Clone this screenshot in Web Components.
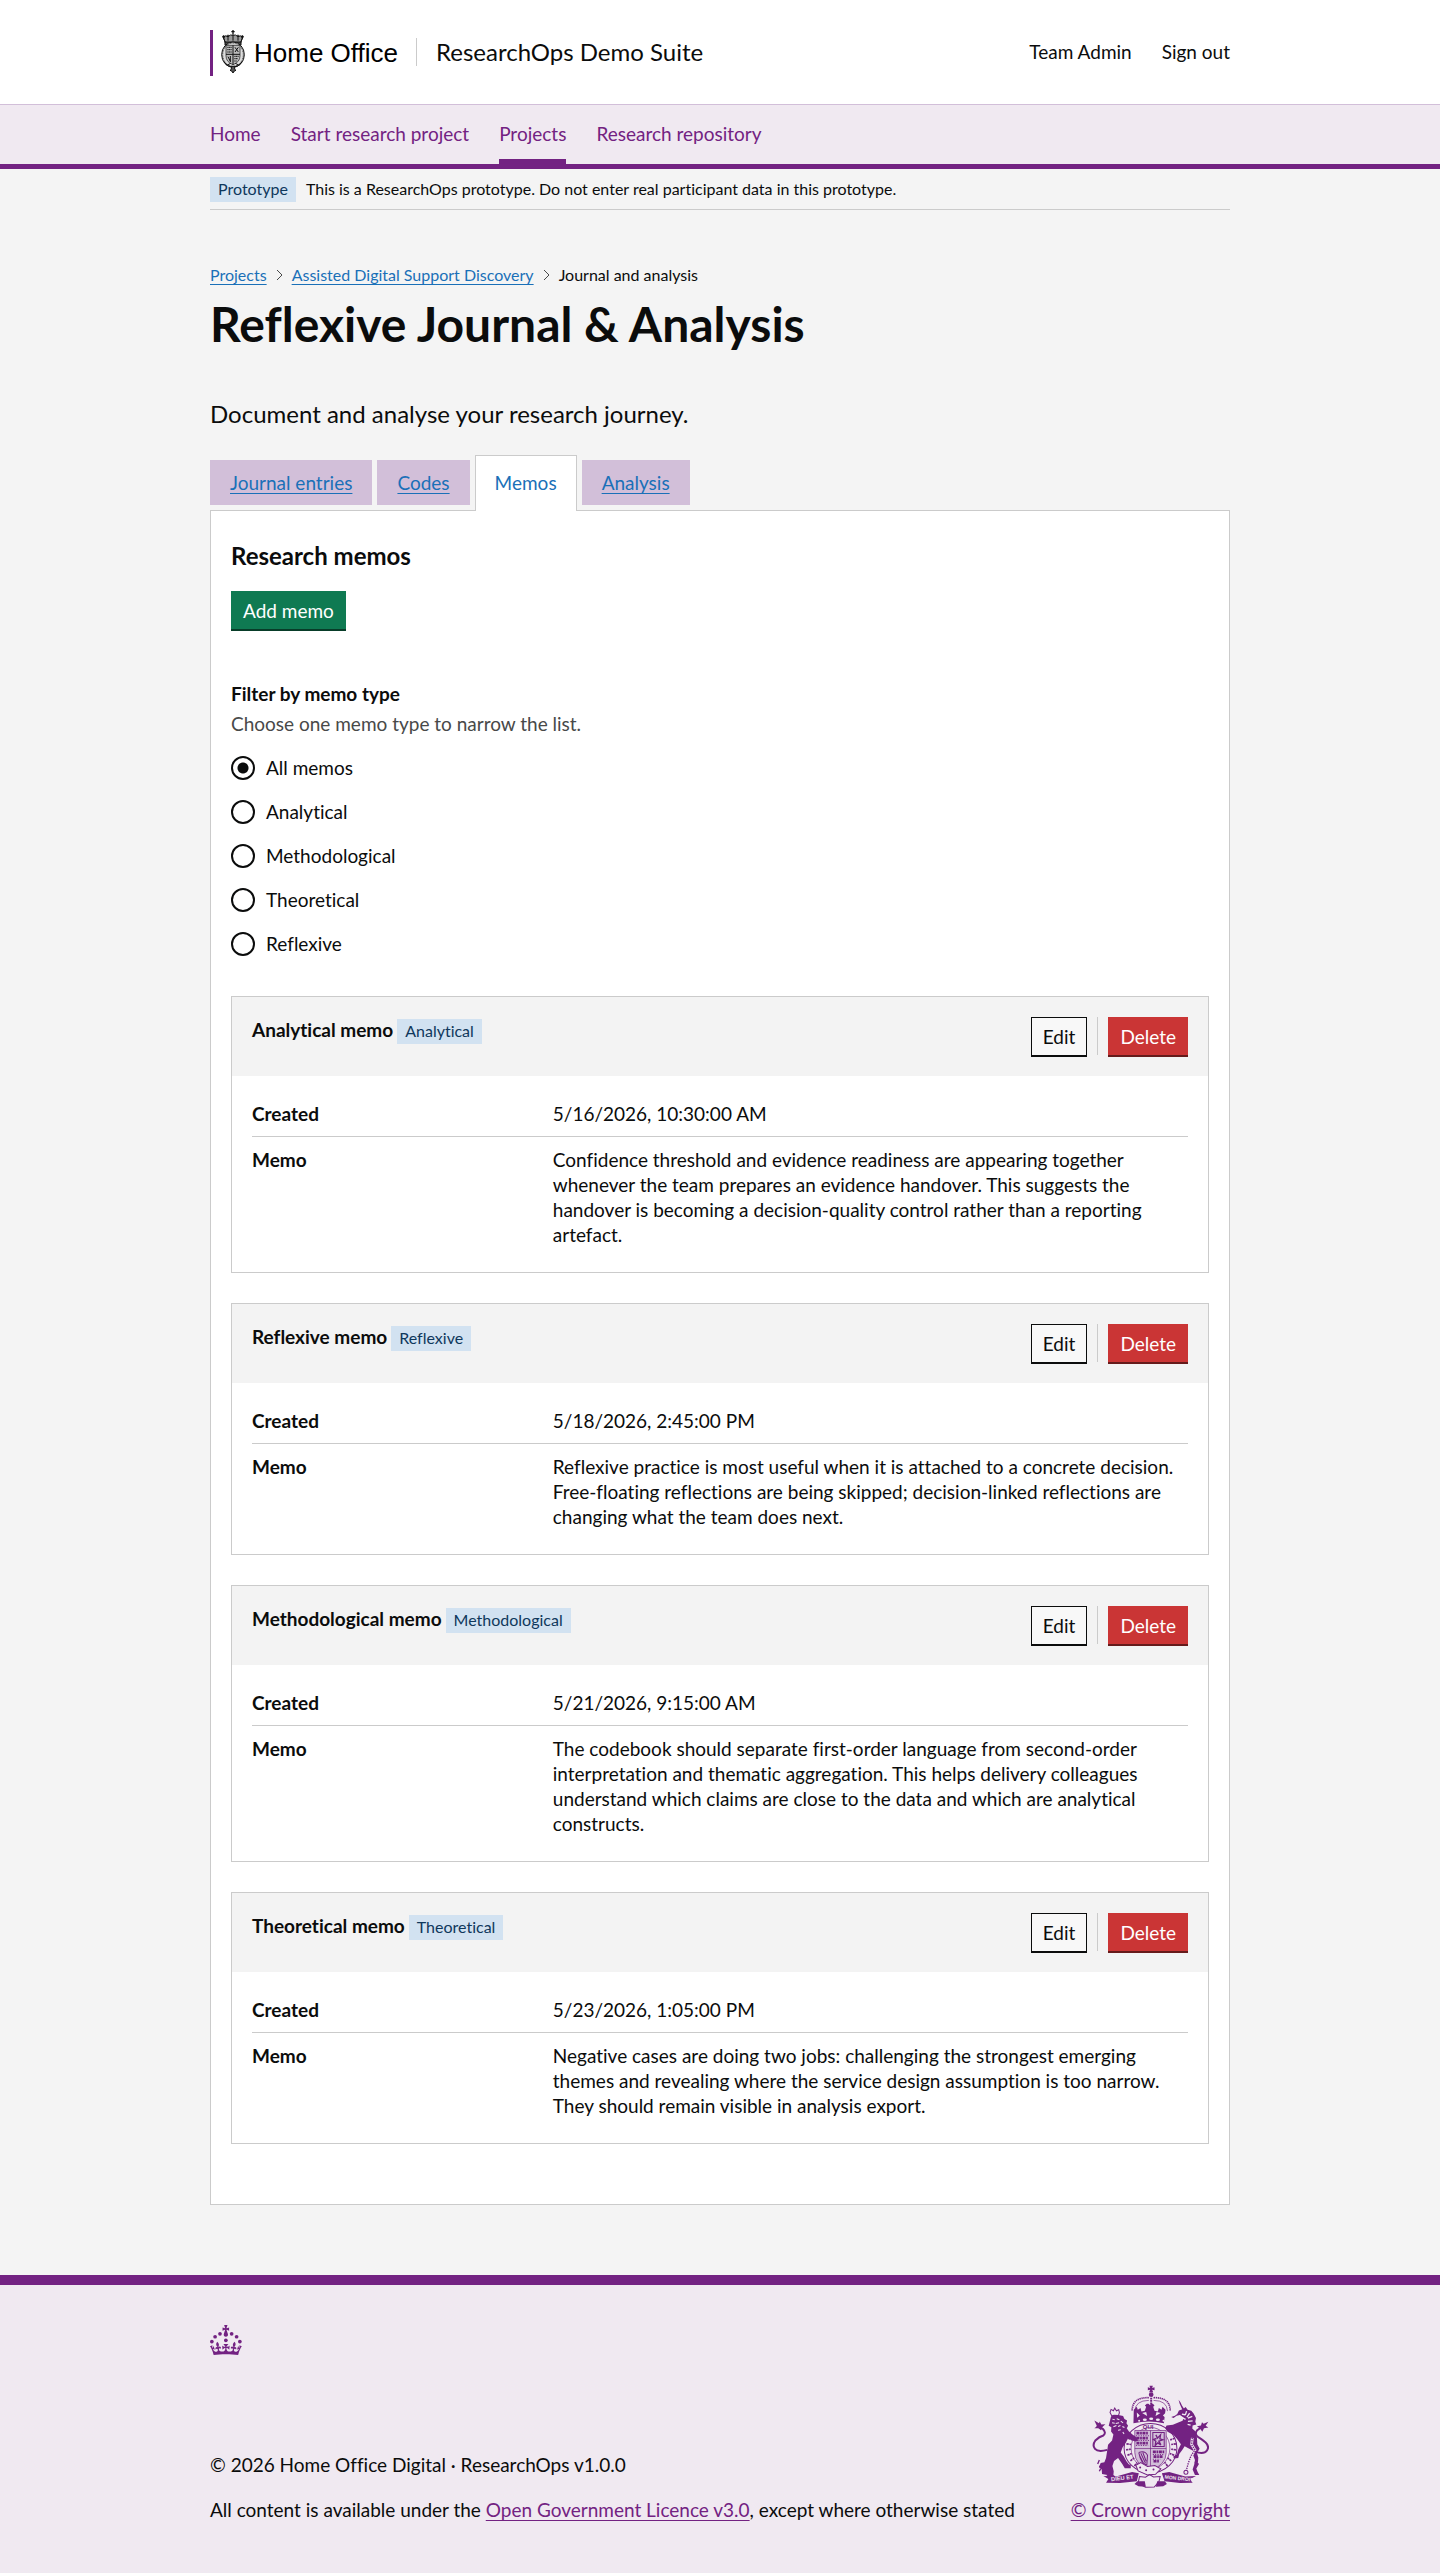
<!DOCTYPE html>
<html lang="en">
<head>
<meta charset="utf-8">
<meta name="viewport" content="width=device-width, initial-scale=1">
<title>Reflexive Journal &amp; Analysis</title>
<style>
    :root {
        --purple: #732282;
        --pale: #f0e9f1;
        --mid: #d2bfd9;
        --ink: #0b0c0c;
        --line: #cbcbcb;
        --link: #1a70b8;
    }

    body {
        margin: 0;
        background: #f4f4f4;
        color: var(--ink);
        font-family: Lato, "Liberation Sans", sans-serif;
        font-size: 19px;
        font-variant-ligatures: none;
        line-height: 25px;
    }

    .container {
        max-width: 1020px;
        margin: 0 auto;
        padding: 0 30px;
    }

    main {
        padding: 55px 0 70px;
    }

    h1 {
        margin: 14px 0 50px;
        font-size: 48px;
        line-height: 50px;
    }

    .lead {
        margin: 0 0 26px;
        font-size: 24px;
        line-height: 30px;
    }
</style>
</head>
<body>
<app-header service="ResearchOps Demo Suite">
    <a href="#">Team Admin</a>
    <a href="#">Sign out</a>
</app-header>
<service-nav items="Home,Start research project,Projects,Research repository" active="Projects"></service-nav>
<div class="container">
    <phase-banner phase="Prototype">This is a ResearchOps prototype. Do not enter real participant data in this prototype.</phase-banner>
    <main>
        <bread-crumbs items="Projects,Assisted Digital Support Discovery,Journal and analysis"></bread-crumbs>
        <h1>Reflexive Journal &amp; Analysis</h1>
        <p class="lead">Document and analyse your research journey.</p>
        <tab-list items="Journal entries,Codes,Memos,Analysis" active="Memos"></tab-list>
        <memo-panel heading="Research memos">
            <memo-filter options="All memos,Analytical,Methodological,Theoretical,Reflexive"></memo-filter>
            <memo-card type="Analytical" created="5/16/2026, 10:30:00 AM">Confidence threshold and evidence readiness are appearing together whenever the team prepares an evidence handover. This suggests the handover is becoming a decision-quality control rather than a reporting artefact.</memo-card>
            <memo-card type="Reflexive" created="5/18/2026, 2:45:00 PM">Reflexive practice is most useful when it is attached to a concrete decision. Free-floating reflections are being skipped; decision-linked reflections are changing what the team does next.</memo-card>
            <memo-card type="Methodological" created="5/21/2026, 9:15:00 AM">The codebook should separate first-order language from second-order interpretation and thematic aggregation. This helps delivery colleagues understand which claims are close to the data and which are analytical constructs.</memo-card>
            <memo-card type="Theoretical" created="5/23/2026, 1:05:00 PM">Negative cases are doing two jobs: challenging the strongest emerging themes and revealing where the service design assumption is too narrow. They should remain visible in analysis export.</memo-card>
        </memo-panel>
    </main>
</div>
<app-footer></app-footer>

<script>
// Small base: each element gives its markup from render()
class BaseElement extends HTMLElement {
    constructor() {
        super();
        this.attachShadow({ mode: "open" });
    }

    connectedCallback() {
        const template = document.createElement("template");
        template.innerHTML = this.render();
        this.shadowRoot.replaceChildren(template.content.cloneNode(true));
    }

    list(name) {
        return (this.getAttribute(name) || "").split(",");
    }
}

const CREST = `
    <svg width="24" height="43" viewBox="63 90 72 129" fill="none" stroke="#111" stroke-width="3" aria-hidden="true">
        <path d="M99 90v14M94 95h10" stroke-width="4"/>
        <path d="M70 112q6-8 14-2q8-8 15-4q7-4 15 4q8-6 14 2l-6 16H76z" fill="#999"/>
        <path d="M70 112l6 16h46l6-16M84 110v12M99 106v16M114 110v12" />
        <circle cx="71" cy="110" r="3" fill="#111"/><circle cx="84" cy="107" r="2"/><circle cx="114" cy="107" r="2"/><circle cx="127" cy="110" r="3" fill="#111"/>
        <path d="M75 126h48v9H75z" fill="#444"/>
        <ellipse cx="99" cy="164" rx="34" ry="38" fill="#ddd"/>
        <ellipse cx="99" cy="164" rx="31" ry="35" stroke-dasharray="3 2" stroke="#333"/>
        <path d="M78 136h42v32q0 18-21 26q-21-8-21-26z" fill="#bbb" stroke-width="2"/>
        <path d="M99 136v58M78 163h42" stroke-width="3"/>
        <path d="M82 142h13M82 149h13M82 156h13M103 169h13M103 176h11M103 183h7" stroke-dasharray="4 1"/>
        <path d="M105 142l10 14M115 142l-10 14M84 170l7 14M91 168v18" />
        <path d="M72 186q10 14 22 14M126 186q-10 14-22 14M80 196l12-6M118 196l-12-6" stroke-width="3"/>
        <path d="M94 199h10v9l4 3-5 2-4 6-4-6-5-2 4-3z" fill="#555"/>
    </svg>`;

const CROWN = `
    <svg width="32" height="30" viewBox="0 0 64 60" fill="currentColor" aria-hidden="true">
        <circle cx="20" cy="17.6" r="3.7"/><circle cx="10.2" cy="23.5" r="3.7"/><circle cx="3.7" cy="33.2" r="3.7"/>
        <circle cx="31.7" cy="30.6" r="3.7"/><circle cx="43.3" cy="17.6" r="3.7"/><circle cx="53.2" cy="23.5" r="3.7"/><circle cx="59.7" cy="33.2" r="3.7"/>
        <path d="M33.1 9.8c.2-.1.3-.3.5-.5l4.6 2.4V4.9l-4.6 1.5c-.1-.2-.3-.3-.5-.5L35 0h-6.7l1.9 5.9c-.2.1-.3.3-.5.5l-4.6-1.5v6.8l4.6-2.4c.1.2.3.3.5.5l-2.6 8c-.9 2.8 1.2 5.7 4.1 5.7c3 0 5.1-2.9 4.1-5.7zM37 37.9s-3.4 3.8-4.1 6.1c2.2 0 4.2-.5 6.4-2.8l-.7 8.5c-2-2.8-4.4-4.1-5.7-3.8.1 3.1.5 6.7 5.8 7.2 3.7.3 6.7-1.5 7-3.8.4-2.6-2-4.3-3.7-1.6-1.4-4.5 2.4-6.1 4.9-3.2-1.9-4.5-1.8-7.7 2.4-10.9 3 4 2.6 7.3-1.2 11.1 2.4-1.3 6.2 0 4 4.6-1.2-2.8-3.7-2.2-4.2.2-.3 1.7.7 3.7 3 4.2 1.9.3 4.7-.9 7-5.9-1.3 0-2.4.7-3.9 1.7l2.4-8c.6 2.3 1.4 3.7 2.2 4.5.6-1.6.5-2.8 0-5.3l5 1.8c-2.6 3.6-5.2 8.7-7.3 17.5-7.4-1.1-15.7-1.7-24.5-1.7-8.8 0-17.1.6-24.5 1.7-2.1-8.9-4.7-13.9-7.3-17.5l5-1.8c-.5 2.5-.6 3.7 0 5.3.8-.8 1.6-2.3 2.2-4.5l2.4 8c-1.5-1-2.6-1.7-3.9-1.7 2.3 5 5.2 6.2 7 5.9 2.3-.4 3.3-2.4 3-4.2-.5-2.4-3-3.1-4.2-.2-2.2-4.6 1.6-6 4-4.6-3.7-3.7-4.2-7.1-1.2-11.1 4.2 3.2 4.3 6.4 2.4 10.9 2.5-2.8 6.3-1.3 4.9 3.2-1.8-2.7-4.1-1-3.7 1.6.3 2.3 3.3 4.1 7 3.8 5.4-.5 5.7-4.2 5.8-7.2-1.3-.2-3.7 1-5.7 3.8l-.7-8.5c2.2 2.3 4.2 2.7 6.4 2.8-.7-2.3-4.1-6.1-4.1-6.1z"/>
    </svg>`;

const ARMS = `
    <svg width="117" height="103" viewBox="104 46 350 308" fill="currentColor" stroke="currentColor" stroke-width="0" aria-hidden="true">
        <!-- crown -->
        <path d="M276 48h10l-2 7 7-2v9l-7-2 3 8h-12l3-8-7 2v-9l7 2z"/>
        <circle cx="281" cy="75" r="7"/>
        <g fill="none" stroke-width="4">
            <path d="M281 84v32" stroke-width="6" stroke-dasharray="5 2"/>
            <path d="M274 84q-50-2-50 40M288 84q50-2 50 40" stroke-width="5" stroke-dasharray="4 2"/>
            <path d="M274 92q-40 0-42 32M288 92q40 0 42 32" stroke-width="2"/>
        </g>
        <path d="M229 120l9-9 3 9 8-5 3 10 10-2 4-12-4-4 6-5h5l4 4 4-4h5l5 5-4 4 4 12 10 2 3-10 8 5 3-9 9 9-5 40q-45-10-91 0z"/>
        <g fill="#f0e9f1">
            <path d="M238 128l9 9-8 7zM325 128l-9 9 8 7zM254 130l12-3 3 12zM309 130l-12-3-3 12z"/>
            <ellipse cx="281" cy="147" rx="6" ry="4"/><ellipse cx="262" cy="150" rx="6" ry="4"/><ellipse cx="301" cy="150" rx="6" ry="4"/><circle cx="245" cy="153" r="3"/><circle cx="318" cy="153" r="3"/>
        </g>
        <!-- garter and shield -->
        <g fill="none">
            <ellipse cx="279" cy="235" rx="79" ry="74" stroke-width="3"/>
            <ellipse cx="279" cy="235" rx="58" ry="62" stroke-width="2"/>
            <path d="M212 205l12 5M207 222l14 2M206 240l14-2M210 256l13-5M219 273l11-9M231 288l8-10M352 205l-14 5M355 222l-14 2M355 240l-14-2M350 256l-13-5M341 273l-11-9M330 288l-9-11" stroke-width="5" stroke-dasharray="7 2"/>
        </g>
        <text x="256" y="179" font-family="Liberation Sans" font-size="18" font-weight="bold">QUI</text>
        <path d="M232 182h94v66q0 36-47 54q-47-18-47-54z" fill="#d2bfd9" stroke-width="2"/>
        <g fill="none">
            <path d="M279 182v120M232 236h94" stroke-width="2"/>
            <path d="M237 190h36M237 205h36M237 220h36M286 246h34M288 260h28M288 274h18" stroke-width="8" stroke-dasharray="9 2 5 2"/>
            <path d="M236 198h38M236 212h38M236 227h36M286 254h32M286 268h22" stroke-width="3" stroke-dasharray="3 4"/>
            <path d="M286 188h34v42h-34z" stroke-width="3"/>
            <path d="M295 195l5 10 9-10-2 12 9 3-12 4 6 11-9-6-8 8 2-13-7-5 9-3" stroke-width="4"/>
            <path d="M244 248q18-8 26 8l-2 30q-18-6-24-38M250 250l14 30M256 248l10 26M246 256l12 24" stroke-width="3"/>
        </g>
        <!-- lion -->
        <path d="M158 128l3-9 7 4 4-8 5 8 7-3 2 9-3 9h-20z" fill="none" stroke-width="3"/>
        <path d="M161 140l8-5 14 1 14 3 4 9 8 4-2 8 5 8-4 7 6 9 12 11 12 8 4 10-8 2-10-3-12-7-6 12-11 17-5 14 9 12 8 14 7 9 6 2v10h-18l-7-12-13-19-12 9-5 15 4 16-1 11 6 5-2 7h-17l-9-8 4-4-16-3-1-13-8-7 5-13 11-2 5-13 4-25 2-14 12-13 4-18-7-9 1-13-8-4z"/>
        <path d="M165 148l7 2M178 147l8 3M164 159l8 1M175 161l10-2M190 154l7 5M168 171l9-4M182 170l7-3M195 170l6 3M182 181l8-1M196 187l4 5" stroke="#f0e9f1" stroke-width="3"/>
        <path d="M150 240q-28 8-37-3t1-25q12-12 24-15q10-8-2-20l-18-8" fill="none" stroke-width="6"/>
        <path d="M111 152l14 8 2-5 5 9 12-1-8 8-5 10-8-6-12 0 8-6z"/>
        <path d="M126 270l-5 12M133 284l-7 7M130 296l-4 8" stroke-width="4"/>
        <!-- unicorn -->
        <path d="M363 90l6 8 4 9 10 15-7 2-6-14-4-9z"/>
        <path d="M352 138l7-5 5-11 13-4 7-6 6 8 11 3 7 8 7 14-2 11 3 8-11 3-1 9 9 8 5 20 1 19 7 14-8 12 4 14-1 15-11 3 2-11-5-13 3-12-12-7-17-9-6 10-10 13-3 12-13 2-2-6 11-6 4-15 8-16-12-16-11-12-17-9-7-11 4-8 19-2 16-7 13-5 3-10-11-7-10 2-9 7-7-3z"/>
        <path d="M373 133l9 2M387 124l-4 12M396 130l-8 12M404 140l-13 5M405 153l-14 2M376 145l8 4M390 164l9 2" stroke="#f0e9f1" stroke-width="4"/>
        <path d="M404 204l-2 20 10 16-12 18-8 22-6 22" fill="none" stroke="#f0e9f1" stroke-width="8"/>
        <path d="M404 204l-2 20 10 16-12 18-8 22-6 22" fill="none" stroke-width="4" stroke-dasharray="4 3"/>
        <circle cx="385" cy="307" r="6" fill="none" stroke-width="3"/>
        <path d="M412 246q28 8 36-4t-4-24q-12-10-22-16q-12-8-4-20l22-16" fill="none" stroke-width="6"/>
        <path d="M452 156l-14 6-5-5-3 10-12 2 9 7 7 10 5-11 13-2-8-5z"/>
        <path d="M414 270l10 12-8 14 4 10 5 9h-13l-7-16z"/>
        <!-- scrolls -->
        <path d="M138 318l38 2 48-14 20 4-6 24-50 5-42-1 7-11z"/>
        <path d="M415 318l-32 2-48-14-22 4 8 24 46 5 38-1-7-11z"/>
        <path d="M235 286l15-8 20 12 22-3 18 10-16 16-24 2-28-12z" fill="#f0e9f1" stroke-width="3"/>
        <circle cx="248" cy="293" r="3"/><circle cx="266" cy="301" r="3"/><circle cx="288" cy="299" r="3"/>
        <path d="M246 320l18 2 12-8 12 7 20-1-4 16-14 15-26 1-22-12z" fill="none" stroke-width="3"/>
        <path d="M240 334h22l3 16-22-1-12-7zM322 334h-23l-4 16 22-1 11-7z"/>
        <g fill="#f0e9f1" font-family="Liberation Sans" font-size="17" font-weight="bold">
            <text x="162" y="334" transform="rotate(-7 162 334)">DIEU ET</text>
            <text x="321" y="326" font-size="15" transform="rotate(6 321 326)">MON DROIT</text>
        </g>
    </svg>`;

class AppHeader extends BaseElement {
    render() {
        return `
            <style>
                :host { display: block; background: #fff; border-bottom: 1px solid var(--mid); }
                .inner {
                    display: flex;
                    align-items: center;
                    max-width: 1020px;
                    margin: 0 auto;
                    padding: 30px 30px 28px;
                }
                .logo {
                    display: flex;
                    align-items: center;
                    box-sizing: border-box;
                    height: 46px;
                    padding-left: 8px;
                    gap: 9px;
                    border-left: 3px solid var(--purple);
                    color: #000;
                    font: 26px/30px "Liberation Sans", Arial, sans-serif;
                    text-decoration: none;
                }
                .logo svg { margin-bottom: 3px; }
                .service {
                    display: flex;
                    align-items: center;
                    height: 28px;
                    margin-left: 18px;
                    padding-left: 19px;
                    border-left: 1px solid var(--line);
                    font-size: 24px;
                }
                .service, .account { margin-bottom: 3px; }
                .account { display: flex; gap: 30px; margin-left: auto; }
                ::slotted(a) { color: var(--ink); text-decoration: none; }
            </style>
            <header class="inner">
                <a class="logo" href="#">${CREST}<span>Home Office</span></a>
                <span class="service">${this.getAttribute("service")}</span>
                <div class="account"><slot></slot></div>
            </header>
        `;
    }
}

class ServiceNav extends BaseElement {
    render() {
        const active = this.getAttribute("active");
        const links = this.list("items").map((item) =>
            `<a href="#" ${item === active ? 'aria-current="page"' : ""}>${item}</a>`).join("");
        return `
            <style>
                :host { display: block; background: var(--pale); border-bottom: 5px solid var(--purple); }
                nav {
                    display: flex;
                    gap: 30px;
                    max-width: 1020px;
                    margin: 0 auto;
                    padding: 0 30px;
                }
                a {
                    padding: 16px 0 13px;
                    border-bottom: 5px solid transparent;
                    color: var(--purple);
                    text-decoration: none;
                }
                a[aria-current] { border-color: var(--purple); }
            </style>
            <nav>${links}</nav>
        `;
    }
}

class AppTag extends BaseElement {
    render() {
        return `
            <style>
                :host {
                    display: inline-block;
                    padding: 2px 8px 3px;
                    background: #d2e2f1;
                    color: #0f385c;
                    font-size: 16px;
                    font-weight: normal;
                    line-height: 20px;
                }
            </style>
            <slot></slot>
        `;
    }
}

class PhaseBanner extends BaseElement {
    render() {
        return `
            <style>
                :host {
                    display: flex;
                    align-items: flex-start;
                    gap: 10px;
                    padding: 8px 0 7px;
                    border-bottom: 1px solid var(--line);
                    font-size: 16px;
                    line-height: 20px;
                }
                span { padding-top: 2px; }
            </style>
            <app-tag>${this.getAttribute("phase")}</app-tag>
            <span><slot></slot></span>
        `;
    }
}

class BreadCrumbs extends BaseElement {
    render() {
        const items = this.list("items");
        const last = items.pop();
        return `
            <style>
                :host { display: block; font-size: 16px; line-height: 20px; }
                ol { display: flex; margin: 0; padding: 0; list-style: none; }
                li { display: flex; align-items: center; }
                a { color: var(--link); text-decoration-thickness: 1px; text-underline-offset: 3px; }
                svg { margin: 0 9px; }
            </style>
            <nav aria-label="Breadcrumb">
                <ol>
                    ${items.map((item) => `<li><a href="#">${item}</a><svg width="7" height="12" viewBox="0 0 7 12" fill="none" stroke="#484949"><path d="M1 1l5 5-5 5"/></svg></li>`).join("")}
                    <li>${last}</li>
                </ol>
            </nav>
        `;
    }
}

class TabList extends BaseElement {
    render() {
        const active = this.getAttribute("active");
        const tabs = this.list("items").map((item) =>
            `<a href="#" role="tab" aria-selected="${item === active}">${item}</a>`).join("");
        return `
            <style>
                :host { display: block; }
                div { display: flex; align-items: flex-start; gap: 5px; }
                a {
                    margin: 5px 0;
                    padding: 10px 20px;
                    background: var(--mid);
                    color: var(--link);
                    text-decoration-thickness: 1px;
                    text-underline-offset: 3px;
                }
                /* the open tab covers the top border of the panel */
                a[aria-selected="true"] {
                    position: relative;
                    margin: 0 0 -1px;
                    padding: 14px 19px 16px;
                    border: 1px solid var(--line);
                    border-bottom: 0;
                    background: #fff;
                    text-decoration: none;
                }
            </style>
            <div role="tablist">${tabs}</div>
        `;
    }
}

class AppButton extends BaseElement {
    render() {
        return `
            <style>
                :host { display: block; }
                button {
                    display: block;
                    height: 38px;
                    margin: 0 0 2px;
                    padding: 0 11px;
                    border: 1px solid #0f7a52;
                    border-radius: 0;
                    background: #0f7a52;
                    box-shadow: 0 2px 0 #083d29;
                    color: #fff;
                    font: inherit;
                    cursor: pointer;
                }
                :host([kind="secondary"]) button {
                    border-color: var(--ink);
                    background: #f8f8f8;
                    box-shadow: 0 1px 0 #0b0c0c;
                    color: var(--ink);
                    height: 39px;
                    margin-bottom: 1px;
                }
                :host([kind="warning"]) button {
                    border-color: #ca3535;
                    background: #ca3535;
                    box-shadow: 0 2px 0 #651b1b;
                }
            </style>
            <button type="button"><slot></slot></button>
        `;
    }
}

class MemoPanel extends BaseElement {
    render() {
        return `
            <style>
                :host {
                    display: block;
                    padding: 30px 20px 60px;
                    border: 1px solid var(--line);
                    background: #fff;
                }
                h2 { margin: 0 0 20px; font-size: 24px; line-height: 30px; }
                .list { display: grid; gap: 30px; }
            </style>
            <h2>${this.getAttribute("heading")}</h2>
            <app-button>Add memo</app-button>
            <div class="list"><slot></slot></div>
        `;
    }
}

class MemoFilter extends BaseElement {
    render() {
        const radios = this.list("options").map((option, i) => `
            <div class="item">
                <input type="radio" name="type" id="type-${i}" ${i === 0 ? "checked" : ""}>
                <label for="type-${i}">${option}</label>
            </div>`).join("");
        return `
            <style>
                :host { display: block; padding: 50px 0 10px; }
                fieldset { margin: 0; padding: 0; border: 0; }
                legend { padding: 0; font-weight: bold; }
                .hint { margin: 5px 0 20px; color: #484949; }
                .items { display: grid; gap: 20px; }
                .item { display: flex; align-items: center; gap: 11px; line-height: 24px; }
                input {
                    appearance: none;
                    width: 24px;
                    height: 24px;
                    margin: 0;
                    border: 2px solid var(--ink);
                    border-radius: 50%;
                }
                input:checked { background: radial-gradient(circle, var(--ink) 5px, transparent 6px); }
            </style>
            <fieldset>
                <legend>Filter by memo type</legend>
                <div class="hint">Choose one memo type to narrow the list.</div>
                <div class="items">${radios}</div>
            </fieldset>
        `;
    }
}

class MemoCard extends BaseElement {
    render() {
        const type = this.getAttribute("type");
        return `
            <style>
                :host { display: block; border: 1px solid var(--line); }
                .head {
                    display: flex;
                    justify-content: space-between;
                    align-items: flex-start;
                    padding: 20px 20px 19px;
                    background: #f3f3f3;
                }
                h3 { display: flex; gap: 4px; margin: 0; font-size: 19px; }
                app-tag { margin-top: 2px; }
                .actions { display: flex; gap: 10px; }
                .actions i { width: 1px; height: 38px; background: var(--line); }
                dl { margin: 0; padding: 15px 20px; }
                .row { display: grid; grid-template-columns: 30% 1fr; gap: 20px; padding: 10px 0; }
                .row + .row { border-top: 1px solid var(--line); }
                dt { font-weight: bold; }
                dd { margin: 0; }
            </style>
            <div class="head">
                <h3>${type} memo <app-tag>${type}</app-tag></h3>
                <div class="actions">
                    <app-button kind="secondary">Edit</app-button>
                    <i></i>
                    <app-button kind="warning">Delete</app-button>
                </div>
            </div>
            <dl>
                <div class="row"><dt>Created</dt><dd>${this.getAttribute("created")}</dd></div>
                <div class="row"><dt>Memo</dt><dd><slot></slot></dd></div>
            </dl>
        `;
    }
}

class AppFooter extends BaseElement {
    render() {
        return `
            <style>
                :host { display: block; background: var(--pale); border-top: 10px solid var(--purple); }
                footer { max-width: 1020px; margin: 0 auto; padding: 40px 30px 51px; }
                svg { display: block; color: var(--purple); }
                .meta { display: flex; justify-content: space-between; align-items: flex-end; margin-top: 30px; }
                p { margin: 20px 0 0; }
                a { color: var(--purple); text-decoration-thickness: 1px; text-underline-offset: 3px; }
                .copy { display: flex; flex-direction: column; align-items: center; gap: 9px; }
            </style>
            <footer>
                ${CROWN}
                <div class="meta">
                    <div>
                        <p>© 2026 Home Office Digital · ResearchOps v1.0.0</p>
                        <p>All content is available under the <a href="#">Open Government Licence v3.0</a>, except where otherwise stated</p>
                    </div>
                    <div class="copy">${ARMS}<a href="#">© Crown copyright</a></div>
                </div>
            </footer>
        `;
    }
}

customElements.define("app-header", AppHeader);
customElements.define("service-nav", ServiceNav);
customElements.define("app-tag", AppTag);
customElements.define("phase-banner", PhaseBanner);
customElements.define("bread-crumbs", BreadCrumbs);
customElements.define("tab-list", TabList);
customElements.define("app-button", AppButton);
customElements.define("memo-panel", MemoPanel);
customElements.define("memo-filter", MemoFilter);
customElements.define("memo-card", MemoCard);
customElements.define("app-footer", AppFooter);
</script>
</body>
</html>
